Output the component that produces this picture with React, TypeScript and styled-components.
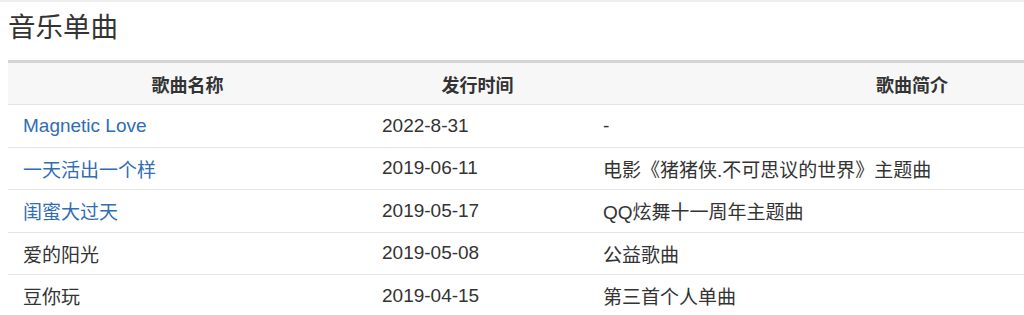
import styled, {createGlobalStyle} from 'styled-components';

interface ISong {
	name: string;
	date: string;
	intro: string;
	link?: boolean;
}

const songs: ISong[] = [
	{name: 'Magnetic Love', date: '2022-8-31', intro: '-', link: true},
	{name: '一天活出一个样', date: '2019-06-11', intro: '电影《猪猪侠.不可思议的世界》主题曲', link: true},
	{name: '闺蜜大过天', date: '2019-05-17', intro: 'QQ炫舞十一周年主题曲', link: true},
	{name: '爱的阳光', date: '2019-05-08', intro: '公益歌曲'},
	{name: '豆你玩', date: '2019-04-15', intro: '第三首个人单曲'},
];

const GlobalStyle = createGlobalStyle`
	body {
		margin: 0;
		background: #fff;
		overflow: hidden;
		font-family: 'Liberation Sans', 'Noto Sans CJK SC', sans-serif;
		color: #333;
	}
`;

const Page = styled.div`
	width: 1024px;
	height: 315px;
	overflow: hidden;
	border-top: 2px solid #f0f0f0;
	box-sizing: border-box;
`;

const Title = styled.h2`
	margin: 0;
	padding: 9px 0 0 8px;
	height: 58px;
	box-sizing: border-box;
	font-size: 27.5px;
	line-height: 34px;
	font-weight: 400;
	color: #333;
`;

const Table = styled.div`
	margin-left: 8px;
	width: 1228px;
	border-top: 3px solid #d4d4d4;
`;

const Row = styled.div<{$head?: boolean}>`
	display: grid;
	grid-template-columns: 359px 221px 648px;
	height: ${(props) => (props.$head ? '41px' : '41.5px')};
	align-items: center;
	border-bottom: 1px solid #e6e6e6;
	background-color: ${(props) => (props.$head ? '#f7f7f7' : '#fff')};
`;

const HeadCell = styled.div`
	text-align: center;
	font-size: 18px;
	font-weight: 700;
	color: #333;
`;

const Cell = styled.div<{$link?: boolean}>`
	padding-left: 15px;
	font-size: 19px;
	color: ${(props) => (props.$link ? '#2f6db6' : '#333')};
	white-space: nowrap;
`;

function App() {
	return (
		<Page>
			<GlobalStyle />
			<Title>音乐单曲</Title>
			<Table>
				<Row $head>
					<HeadCell>歌曲名称</HeadCell>
					<HeadCell>发行时间</HeadCell>
					<HeadCell>歌曲简介</HeadCell>
				</Row>
				{songs.map((song) => (
					<Row key={song.name}>
						<Cell $link={song.link}>{song.name}</Cell>
						<Cell>{song.date}</Cell>
						<Cell>{song.intro}</Cell>
					</Row>
				))}
			</Table>
		</Page>
	);
}
export default App;
